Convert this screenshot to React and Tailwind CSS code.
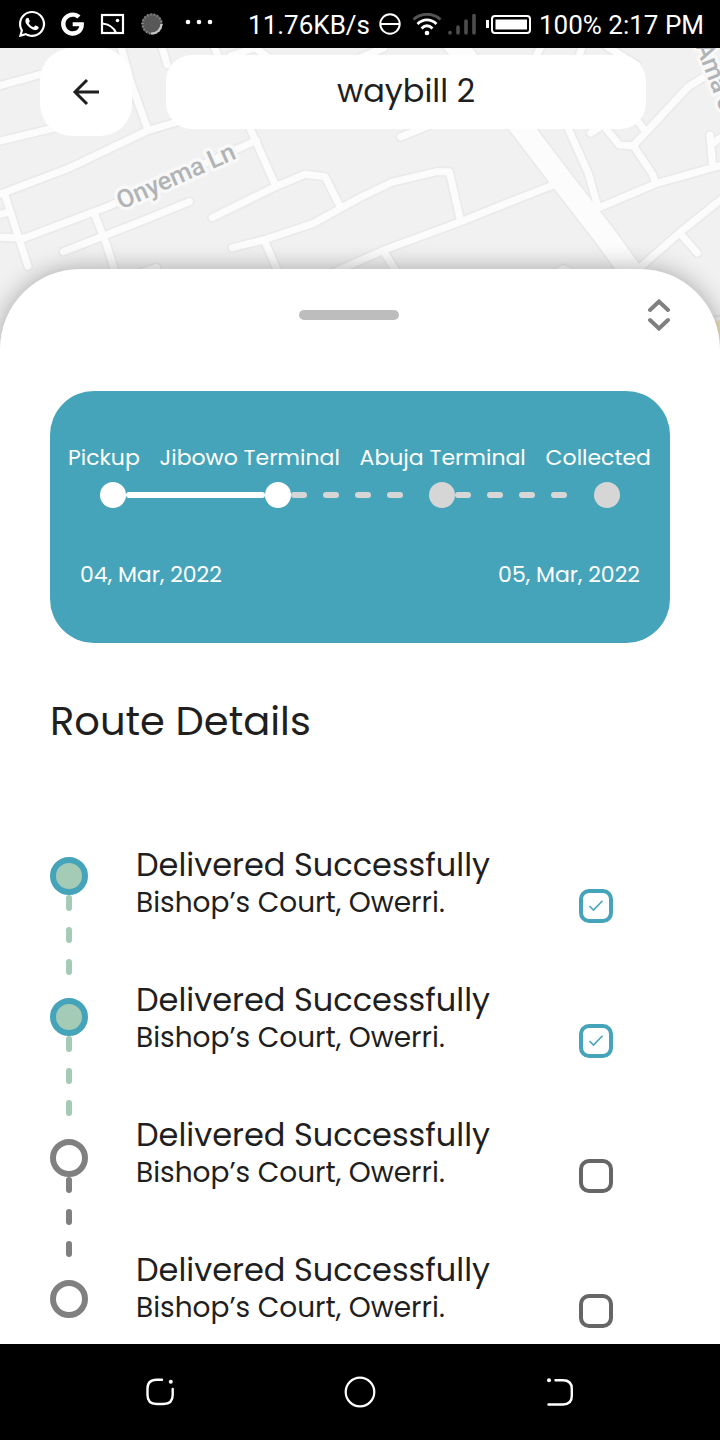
import { useState } from "react";
import { FaWhatsapp, FaGoogle } from "react-icons/fa";

const LOCAL_ROADS = [
  "M0 122 L250 52",
  "M0 288 L200 240",
  "M0 448 L210 368 L440 258 L560 222",
  "M362 0 L392 110 L442 250",
  "M484 0 L502 60",
  "M640 0 L750 250 L826 420",
  "M690 34 L765 8 L800 34",
  "M15 450 L50 560 L84 664",
  "M0 508 L30 500",
  "M0 577 L72 580 L330 482 L770 286",
  "M190 620 L420 530 L568 470",
  "M285 510 L320 600 L348 690",
  "M400 690 L470 668",
  "M637 518 L826 425 L915 388 L975 395 L1018 480",
  "M697 608 L790 585 L940 535 L1080 458 L1175 412 L1310 380 L1348 380 L1382 528",
  "M795 590 L838 690",
  "M960 700 L1160 612 L1382 530 L1520 475 L1665 418",
  "M1150 618 L1196 690",
  "M1202 276 L1300 236",
  "M1080 38 L1150 10",
  "M1600 50 L1625 0",
  "M1732 50 L1748 0",
  "M1820 4 L1910 60",
  "M1700 240 L1765 385 L1795 490",
  "M1770 488 L1802 486 L1970 415 L2160 362",
  "M2125 88 L2065 125 L1930 270 L1900 302 L1858 300 L1808 238",
  "M1900 302 L1958 388 L1966 412",
  "M1934 256 L1900 210",
  "M1772 264 L1800 246",
  "M1920 668 L2040 562 L2180 450",
  "M2040 565 L2092 624",
  "M2130 270 L2138 365",
  "M2137 296 L2165 276",
  "M1650 690 L1690 672 L1730 690",
];

const MAIN_ROAD = "M1350 -20 L1568 252 L1690 412 L1820 580 L1900 690";

const STOPS = [
  { name: "Pickup", reached: true },
  { name: "Jibowo Terminal", reached: true },
  { name: "Abuja Terminal", reached: false },
  { name: "Collected", reached: false },
];

const ROUTE = [
  { id: "stop-1", title: "Delivered Successfully", place: "Bishop’s Court, Owerri.", done: true },
  { id: "stop-2", title: "Delivered Successfully", place: "Bishop’s Court, Owerri.", done: true },
  { id: "stop-3", title: "Delivered Successfully", place: "Bishop’s Court, Owerri.", done: false },
  { id: "stop-4", title: "Delivered Successfully", place: "Bishop’s Court, Owerri.", done: false },
];

function StatusBar() {
  return (
    <div className="flex h-12 items-center justify-between bg-black pr-4 pl-[18px] font-['Roboto',sans-serif] text-[26px] leading-8 text-white">
      <div className="flex items-center gap-[15px]">
        <FaWhatsapp className="h-[30px] w-[28px]" />
        <FaGoogle className="h-[24px] w-[23px]" />
        <svg viewBox="0 0 26 24" className="h-6 w-[26px]" fill="none" stroke="currentColor" strokeWidth="2.200">
          <rect x="3" y="3" width="21" height="18" />
          <path d="M3 11.500 C10 12 14.500 15 17 21" />
          <circle cx="18.500" cy="8.500" r="1.800" fill="currentColor" stroke="none" />
        </svg>
        <svg viewBox="0 0 24 24" className="h-6 w-6" fill="none">
          <circle cx="12" cy="12" r="10.500" fill="#585858" />
          <circle cx="12" cy="12" r="9.500" stroke="#8c8c8c" strokeWidth="2.500" strokeDasharray="1.100 2.200" />
          <path d="M21.500 12 A10 10 0 0 1 11 21.500" stroke="#c8c8c8" strokeWidth="2" />
        </svg>
        <svg viewBox="0 0 40 24" className="h-6 w-10" fill="currentColor">
          <circle cx="9" cy="10" r="2.300" />
          <circle cx="20" cy="10" r="2.300" />
          <circle cx="31" cy="10" r="2.300" />
        </svg>
      </div>
      <div className="flex items-center gap-1.5 pt-0.5">
        <span>11.76KB/s</span>
        <svg viewBox="0 0 24 24" className="ml-0.5 h-6 w-6" fill="none" stroke="currentColor" strokeWidth="2">
          <circle cx="12" cy="11" r="9.700" />
          <path d="M2.500 11 H21.500" />
        </svg>
        <svg viewBox="0 0 30 24" className="ml-1 h-6 w-[30px]" fill="none" stroke="currentColor" strokeWidth="2.800">
          <path d="M1.500 6.500 C9 -0.500 21 -0.500 28.500 6.500" stroke="#555" />
          <path d="M5.500 11 C11 5.500 19 5.500 24.500 11" />
          <path d="M9.500 15.500 C13 12 17 12 20.500 15.500" />
          <circle cx="15" cy="20" r="2.300" fill="currentColor" stroke="none" />
        </svg>
        <svg viewBox="0 0 28 24" className="h-6 w-7" stroke="#4d4d4d" strokeWidth="3.600" strokeLinecap="round">
          <path d="M2 19.500 V20 M10 14 V20 M18 8 V20 M26 2.500 V20" />
        </svg>
        <svg viewBox="0 0 45 20" className="ml-1 h-5 w-[45px]" fill="none">
          <rect x="0" y="5" width="3" height="8" fill="currentColor" />
          <rect x="6" y="1" width="38" height="17" rx="3" stroke="currentColor" strokeWidth="2" />
          <rect x="9.500" y="4.500" width="31.500" height="10" fill="currentColor" />
        </svg>
        <span className="ml-0.5">100% 2:17 PM</span>
      </div>
    </div>
  );
}

function MapBackground() {
  return (
    <svg
      viewBox="0 9 2160 900"
      preserveAspectRatio="xMidYMin slice"
      className="absolute inset-x-0 top-0 h-[300px] w-full bg-[#f1f1f1]"
      fill="none"
      strokeLinecap="round"
      strokeLinejoin="round"
      aria-hidden="true"
    >
      <path d="M2160 825 L2120 835 V909 H2160 Z" fill="#efe6c4" />
      <path d="M2110 818 L2165 812" stroke="#e0e1e3" strokeWidth="6" />
      <g stroke="#e8eaeb" strokeWidth="31">
        {LOCAL_ROADS.map((d) => (
          <path key={d} d={d} />
        ))}
      </g>
      <path d={MAIN_ROAD} stroke="#e8eaeb" strokeWidth="76" />
      <g stroke="#fcfcfc" strokeWidth="21">
        {LOCAL_ROADS.map((d) => (
          <path key={d} d={d} />
        ))}
      </g>
      <path d={MAIN_ROAD} stroke="#fcfcfc" strokeWidth="66" />
      <g
        fill="#b1b4b7"
        stroke="#f8f8f8"
        strokeWidth="20"
        paintOrder="stroke"
        className="font-['Roboto',sans-serif] text-[76px] font-medium"
      >
        <text x="364" y="494" transform="rotate(-24 364 494)">
          Onyema Ln
        </text>
        <text x="2086" y="2" transform="rotate(69 2086 2)">
          Ama J
        </text>
      </g>
    </svg>
  );
}

function Header() {
  return (
    <header className="relative flex items-center gap-[34px] pr-[74px] pl-10">
      <button type="button" aria-label="Back" className="grid h-[88px] w-[92px] place-items-center rounded-[32px] bg-white">
        <svg viewBox="0 0 28 28" className="h-7 w-7" fill="none" stroke="#1f1f1f" strokeWidth="3">
          <path d="M3 14 H27 M15 2 L3 14 L15 26" />
        </svg>
      </button>
      <h1 className="flex h-[74px] flex-1 items-center justify-center rounded-[26px] bg-white pb-0.5 text-[32px] leading-10">
        waybill 2
      </h1>
    </header>
  );
}

function Stepper() {
  return (
    <div className="mt-[9px] flex items-center px-[50px]">
      {STOPS.map((stop, i) => {
        const next = STOPS[i + 1];
        return (
          <div key={stop.name} className={next ? "flex flex-1 items-center" : "flex items-center"}>
            <span className={`size-[26px] shrink-0 rounded-full ${stop.reached ? "bg-white" : "bg-[#d6d6d6]"}`} />
            {next && next.reached && <span className="h-1.5 flex-1 rounded-full bg-white" />}
            {next && !next.reached && (
              <span className="flex flex-1 gap-4">
                {[0, 1, 2, 3].map((n) => (
                  <span key={n} className="h-1.5 w-4 rounded-full bg-[#d6d6d6]" />
                ))}
              </span>
            )}
          </div>
        );
      })}
    </div>
  );
}

function ProgressCard() {
  return (
    <section className="mt-[60px] rounded-[44px] bg-[#46a4ba] pt-[52px] pb-[53px] text-[22px] leading-[30px] text-white">
      <div className="flex justify-between pr-[19px] pl-[18px] whitespace-nowrap">
        {STOPS.map((stop) => (
          <span key={stop.name}>{stop.name}</span>
        ))}
      </div>
      <Stepper />
      <div className="mt-[52px] flex justify-between px-[30px]">
        <span>04, Mar, 2022</span>
        <span>05, Mar, 2022</span>
      </div>
    </section>
  );
}

function Timeline() {
  return (
    <div className="flex flex-col pt-3" aria-hidden="true">
      {ROUTE.map((stop, i) => (
        <div key={stop.id} className={i < ROUTE.length - 1 ? "flex h-[141px] flex-col items-center" : "flex flex-col items-center"}>
          <span
            className={`size-[38px] rounded-full border-6 ${
              stop.done ? "border-[#46a4ba] bg-[#a4cbb5]" : "border-[#808080] bg-white"
            }`}
          />
          {i < ROUTE.length - 1 && (
            <span className="flex flex-col gap-4">
              {[0, 1, 2].map((n) => (
                <span key={n} className={`h-4 w-1.5 rounded-full ${stop.done ? "bg-[#a4cbb5]" : "bg-[#808080]"}`} />
              ))}
            </span>
          )}
        </div>
      ))}
    </div>
  );
}

function RouteItem({ stop }) {
  const [checked, setChecked] = useState(stop.done);
  return (
    <li className="flex items-start justify-between pr-[57px]">
      <label htmlFor={stop.id} className="flex flex-col whitespace-nowrap">
        <span className="text-[32px] leading-10">{stop.title}</span>
        <span className="text-[28px] leading-[35px]">{stop.place}</span>
      </label>
      <span className="-mb-1 grid place-items-center pt-11">
        <input
          id={stop.id}
          type="checkbox"
          checked={checked}
          onChange={(e) => setChecked(e.target.checked)}
          className="col-start-1 row-start-1 size-[34px] appearance-none rounded-[10px] border-4 border-[#666] checked:border-[#46a4ba]"
        />
        {checked && (
          <svg
            viewBox="0 0 16 16"
            className="pointer-events-none col-start-1 row-start-1 size-4"
            fill="none"
            stroke="#46a4ba"
            strokeWidth="1.600"
          >
            <path d="M1.500 8 L5.500 12 L14.500 2.800" />
          </svg>
        )}
      </span>
    </li>
  );
}

function Sheet() {
  return (
    <main className="relative mt-[133px] flex-1 rounded-t-[80px] bg-white px-[50px] pt-[30px] shadow-[0_0_24px_rgba(0,0,0,0.32)]">
      <div className="flex items-center">
        <div className="flex flex-1 justify-center">
          <span className="h-2.5 w-[100px] rounded-full bg-[#bdbdbd]" />
        </div>
        <button type="button" aria-label="Expand" className="h-8 w-[22px]">
          <svg viewBox="0 0 22 32" className="h-8 w-[22px]" fill="none" stroke="#808080" strokeWidth="4" strokeLinecap="round">
            <path d="M2 11 L11 2.500 L20 11 M2 21 L11 29.500 L20 21" />
          </svg>
        </button>
      </div>
      <ProgressCard />
      <h2 className="mt-[50px] text-[40px] leading-[56px]">Route Details</h2>
      <div className="mt-24 flex gap-12">
        <Timeline />
        <ul className="flex flex-1 flex-col gap-[60px]">
          {ROUTE.map((stop) => (
            <RouteItem key={stop.id} stop={stop} />
          ))}
        </ul>
      </div>
    </main>
  );
}

function NavBar() {
  return (
    <nav className="relative grid h-24 grid-cols-3 place-items-center bg-black px-[60px] text-white">
      <button type="button" aria-label="Recent apps">
        <svg viewBox="0 0 32 32" className="size-8" fill="none" stroke="currentColor" strokeWidth="2.400" strokeLinecap="round">
          <path d="M18 3.700 H12.500 Q3.500 3.700 3.500 12.500 V19 Q3.500 28 12.500 28 H19.500 Q28.700 28 28.700 19 V13" />
          <circle cx="26.800" cy="5.800" r="2" fill="currentColor" stroke="none" />
        </svg>
      </button>
      <button type="button" aria-label="Home">
        <svg viewBox="0 0 32 32" className="size-8" fill="none" stroke="currentColor" strokeWidth="2.200">
          <circle cx="16" cy="16" r="14.300" />
        </svg>
      </button>
      <button type="button" aria-label="Return">
        <svg viewBox="0 0 32 32" className="size-8" fill="none" stroke="currentColor" strokeWidth="2.400" strokeLinecap="round">
          <path d="M11.500 4.300 H19 Q27.800 4.300 27.800 13 V20 Q27.800 28.500 19 28.500 H4.500" />
          <circle cx="5" cy="4.300" r="2" fill="currentColor" stroke="none" />
        </svg>
      </button>
    </nav>
  );
}

export default function App() {
  return (
    <div className="flex min-h-screen flex-col overflow-hidden bg-white font-['Poppins','Inter',sans-serif] text-[#1f1f1f]">
      <StatusBar />
      <div className="relative flex flex-1 flex-col">
        <MapBackground />
        <Header />
        <Sheet />
      </div>
      <NavBar />
    </div>
  );
}
